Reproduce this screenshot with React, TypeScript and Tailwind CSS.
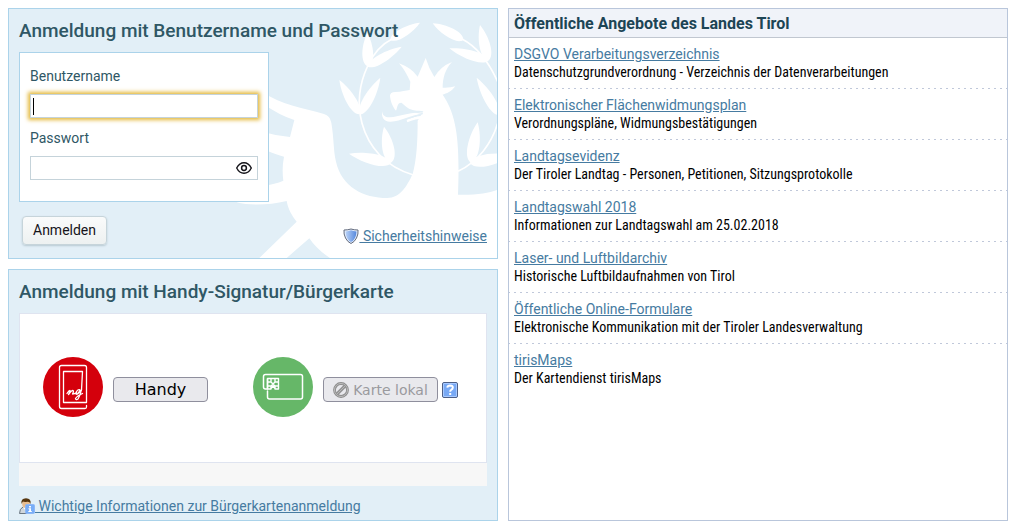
import { useState } from "react";

const offers = [
  { title: "DSGVO Verarbeitungsverzeichnis", text: "Datenschutzgrundverordnung - Verzeichnis der Datenverarbeitungen" },
  { title: "Elektronischer Flächenwidmungsplan", text: "Verordnungspläne, Widmungsbestätigungen" },
  { title: "Landtagsevidenz", text: "Der Tiroler Landtag - Personen, Petitionen, Sitzungsprotokolle" },
  { title: "Landtagswahl 2018", text: "Informationen zur Landtagswahl am 25.02.2018" },
  { title: "Laser- und Luftbildarchiv", text: "Historische Luftbildaufnahmen von Tirol" },
  { title: "Öffentliche Online-Formulare", text: "Elektronische Kommunikation mit der Tiroler Landesverwaltung" },
  { title: "tirisMaps", text: "Der Kartendienst tirisMaps" },
];

// tip x/y, base x/y, half width
const leaves = [
  [570, 68, 481, 120, 20],
  [412, 100, 414, 200, 24],
  [515, 140, 413, 200, 20],
  [328, 240, 388, 343, 22],
  [451, 233, 390, 343, 22],
  [462, 380, 483, 488, 26],
  [357, 461, 483, 490, 24],
  [608, 70, 700, 120, 22],
  [750, 75, 775, 182, 24],
  [658, 145, 775, 182, 22],
  [740, 233, 806, 345, 22],
  [743, 367, 722, 488, 26],
  [846, 466, 720, 490, 26],
];

function leafPath([tx, ty, bx, by, w]: number[]) {
  const dx = bx - tx;
  const dy = by - ty;
  const len = Math.hypot(dx, dy);
  const at = (t: number, side: number) =>
    `${tx + dx * t - (dy / len) * side} ${ty + dy * t + (dx / len) * side}`;
  return `M${tx} ${ty}C${at(0.35, w * 0.8)} ${at(0.9, w)} ${bx} ${by}C${at(0.9, -w)} ${at(0.35, -w * 0.8)} ${tx} ${ty}Z`;
}

function Eagle() {
  return (
    <svg
      className="pointer-events-none absolute right-0 bottom-0 h-[249px] w-[267px]"
      viewBox="0 27 801 747"
      fill="white"
      aria-hidden
    >
      {/* Body and wing */}
      <path d="M100 277C150 313 220 325 282 342Q300 347 304 368C312 415 310 450 318 485C335 560 400 594 472 594C510 594 530 560 548 522C560 480 563 420 563 362L600 300L637 283C680 345 690 420 684 584C740 585 775 580 801 570V774H300C275 758 252 737 238 715L170 774H88L200 665C185 645 175 630 170 603C120 615 60 618 20 607L100 590L100 557Q135 553 160 542Q155 505 162 470Q140 465 100 448V396Q140 408 180 411L193 360Q150 347 100 312Z" />
      {/* Head */}
      <path d="M539 270L541 245C530 222 521 205 507 190Q545 204 563 230Q577 198 587 174Q596 204 613 231Q632 199 666 186C645 208 638 235 638 263Q660 264 676 259C664 275 650 281 637 284L660 330L563 372C566 362 572 357 585 356L607 354V345C600 335 580 333 560 332C535 330 525 316 514 308C501 308 503 322 498 332C486 318 481 300 480 287Q480 277 496 276C515 275 528 272 539 270Z" />
      {/* Tongue */}
      <path d="M457 333C456 345 465 353 480 352C510 351 535 336 577 338L578 342C540 345 515 364 482 365C461 366 453 350 457 333Z" />
      <path d="M530 360Q552 346 607 345V356Q560 352 532 367Z" />
      <g fill="none" stroke="#e2eff7" strokeWidth="3">
        <path d="M517 337Q550 330 578 341Q560 347 538 355" />
      </g>
      {/* Laurel */}
      {leaves.map((leaf, i) => (
        <path key={i} d={leafPath(leaf)} />
      ))}
      <g fill="none" stroke="white" strokeWidth="5">
        <path d="M485 118Q440 140 413 198C384 260 383 320 396 370C415 440 465 500 550 525" />
        <path d="M696 117Q760 150 803 245" />
        <path d="M803 370C785 430 745 485 684 514" />
      </g>
    </svg>
  );
}

function ShieldIcon() {
  return (
    <svg className="h-4 w-4 shrink-0" viewBox="0 0 16 16" aria-hidden>
      <defs>
        <linearGradient id="shield">
          <stop offset="0" stopColor="#b9d2f7" />
          <stop offset="1" stopColor="#5588dd" />
        </linearGradient>
      </defs>
      <path d="M1 2Q5 2 8 1Q11 2 15 2Q15.500 6 13.500 10Q11.500 14 8 15.500Q4.500 14 2.500 10Q0.500 6 1 2Z" fill="#e6f0ff" stroke="#626a7c" />
      <path d="M2.500 3.500Q6 3.300 8 2.300Q10 3.300 13.500 3.500Q13.500 7 12 10Q10.500 13 8 14Q5.500 13 4 10Q2.500 7 2.500 3.500Z" fill="url(#shield)" />
    </svg>
  );
}

function EyeIcon() {
  return (
    <svg className="h-4 w-4" viewBox="0 0 16 16" fill="none" stroke="#15141a" aria-hidden>
      <path d="M0.700 8C2.500 4.400 5 2.700 8 2.700S13.500 4.400 15.300 8C13.500 11.600 11 13.300 8 13.300S2.500 11.600 0.700 8Z" strokeWidth="1.400" />
      <circle cx="8" cy="8" r="2.400" strokeWidth="1.500" />
    </svg>
  );
}

function PhoneIcon() {
  return (
    <svg className="h-[60px] w-[60px] shrink-0" viewBox="0 0 60 60" fill="none" stroke="white" strokeLinecap="round" strokeLinejoin="round" aria-hidden>
      <circle cx="30" cy="30" r="30" fill="#d4000c" stroke="none" />
      <path d="M43.500 48.500V50Q43.500 51.500 42 51.500H18.500Q16.500 51.500 16.500 49.500V10.500Q16.500 8.500 18.500 8.500H41.500Q43.500 8.500 43.500 10.500V45.500H20.500V14.500H39.500L38.500 33" strokeWidth="1.300" />
      <path d="M24 36.500Q26 33.500 27 33.500Q28 34 25.500 37.500Q29 33 30 33.500Q31 34.500 29.500 37Q31.500 37 33.500 35.500C32 37 33.500 38.500 35.500 35.500Q37.500 33.500 36.500 32.700C34 32 31.500 37.500 34.500 37Q37 35.500 38.500 32.500Q37.500 38 35 42Q33 43.500 32.500 41.500Q34 39 39.500 36.500" strokeWidth="1.300" />
    </svg>
  );
}

function CardIcon() {
  return (
    <svg className="h-[60px] w-[60px] shrink-0" viewBox="0 0 60 60" fill="none" stroke="white" strokeLinecap="round" strokeLinejoin="round" aria-hidden>
      <circle cx="30" cy="30" r="30" fill="#66b768" stroke="none" />
      <path d="M14.500 34V40Q14.500 42 16.500 42H47.500Q49.500 42 49.500 40V19.500Q49.500 17.500 47.500 17.500H12.500Q10.500 17.500 10.500 19.500V30Q10.500 32 12.500 32H14.500V22" strokeWidth="1.500" />
      <path d="M14.500 21.500H25.500V32H22.500L20 29L17.500 32H14.500ZM14.500 25H18L20 27L22 25H25.500M14.500 29H18L20 27L22 29H25.500M18 21.500V25M22 21.500V25M18 29V32M22 29V32" strokeWidth="1.400" />
    </svg>
  );
}

function BlockedIcon() {
  return (
    <svg className="h-4 w-4 shrink-0" viewBox="0 0 16 16" fill="none" aria-hidden>
      <circle cx="8" cy="8" r="6.500" stroke="#8d8d8d" strokeWidth="2.800" />
      <circle cx="8" cy="8" r="6.500" stroke="#bdbdbd" strokeWidth="1" />
      <path d="M4 12L12 4" stroke="#929292" strokeWidth="3.200" />
      <path d="M4 12L12 4" stroke="#b5b5b5" strokeWidth="1" />
    </svg>
  );
}

function HelpIcon() {
  return (
    <svg className="h-4 w-4" viewBox="0 0 16 16" fill="none" aria-hidden>
      <rect x="0.500" y="0.500" width="15" height="15" rx="1.500" fill="#78a9f5" stroke="#4d5f86" />
      <rect x="1.500" y="1.500" width="13" height="13" rx="0.500" stroke="#a9caff" />
      <path d="M5.300 5.700Q5.500 3.500 8.200 3.500Q10.900 3.600 10.800 5.700Q10.700 7 9.200 7.800Q8.200 8.300 8.200 9.700" stroke="white" strokeWidth="2" />
      <path d="M7.200 11H9.200V13H7.200Z" fill="white" />
    </svg>
  );
}

function UserInfoIcon() {
  return (
    <svg className="h-4 w-4 shrink-0" viewBox="0 0 16 16" aria-hidden>
      <path d="M0.500 15.500Q0.500 10.500 4 9L10 9L12 15.500Z" fill="#cfd6dc" stroke="#6b7680" />
      <path d="M4 9.500L7 13L9.500 9.500L7 8Z" fill="white" />
      <ellipse cx="7" cy="5.800" rx="3.800" ry="4.200" fill="#e8bd90" />
      <path d="M2.500 6Q1.500 0.300 7 0.200Q12.500 0.300 11.500 6Q10.500 3.500 8.500 3.800Q5 4.200 4 3.500Q3 4.500 2.500 6Z" fill="#56360f" />
      <rect x="6.500" y="6.500" width="9" height="9" rx="1" fill="#79adf7" stroke="#8fb8f6" />
      <path d="M10 8H12V9.500H10ZM9.500 10.300H12V13H12.800V14H9.300V13H10.200V11.200H9.500Z" fill="white" />
    </svg>
  );
}

export default function App() {
  const [user, setUser] = useState("");
  const [password, setPassword] = useState("");
  const [visible, setVisible] = useState(false);

  return (
    <div className="flex gap-2.5 py-2 pr-[9px] pl-2 font-['Roboto','Liberation_Sans',sans-serif] text-sm leading-5 text-[#2f5765]">
      <main className="flex w-[49%] shrink-0 flex-col gap-2.5">
        {/* Login with user name */}
        <section className="relative border border-[#abd3ea] bg-[#e2eff7] px-2.5 pt-2.5 pb-3">
          <Eagle />
          <form className="relative" onSubmit={(e) => e.preventDefault()}>
            <h2 className="mb-[9px] text-[19px] leading-6 font-medium">Anmeldung mit Benutzername und Passwort</h2>
            <div className="flex w-[250px] flex-col border border-[#abd3ea] bg-white px-2.5 pt-[13px] pb-[21px]">
              <label htmlFor="user" className="mb-2">Benutzername</label>
              <div className="relative mb-2.5 flex h-6 border border-[#c5d3da] bg-white shadow-[0_0_4px_2px_#e4b93c]">
                <input
                  id="user"
                  autoFocus
                  value={user}
                  onChange={(e) => setUser(e.target.value)}
                  className="min-w-0 flex-1 px-0.5 text-black outline-none"
                />
                {!user && <span className="pointer-events-none absolute top-[3px] left-0.5 h-[17px] w-px bg-black" />}
              </div>
              <label htmlFor="password" className="mb-2">Passwort</label>
              <div className="flex h-6 items-center border border-[#c5d3da] bg-white pr-[5px]">
                <input
                  id="password"
                  type={visible ? "text" : "password"}
                  value={password}
                  onChange={(e) => setPassword(e.target.value)}
                  className="min-w-0 flex-1 px-0.5 text-black outline-none"
                />
                <button type="button" aria-label="Passwort anzeigen" onClick={() => setVisible(!visible)}>
                  <EyeIcon />
                </button>
              </div>
            </div>
            <div className="mt-3.5 flex items-end justify-between pl-[3px]">
              <button className="mb-px h-[29px] rounded border border-[#c6d4da] bg-linear-to-b from-[#fafbfb] to-[#edf1f1] px-2.5 pb-0.5 text-[#15141a] shadow-[0_1px_2px_#b8c9d2]">
                Anmelden
              </button>
              <a href="#sicherheit" className="flex items-center text-[#467ba1] underline">
                <ShieldIcon />
                <span>&nbsp;Sicherheitshinweise</span>
              </a>
            </div>
          </form>
        </section>

        {/* Login with mobile signature or card */}
        <section className="border border-[#abd3ea] bg-[#e2eff7] px-2.5 pt-2.5 pb-1">
          <h2 className="mb-[9px] text-[19px] leading-6 font-medium">Anmeldung mit Handy-Signatur/Bürgerkarte</h2>
          <div className="flex border border-[#dfe4f0] bg-white px-[23px] pt-[43px] pb-[45px] font-['DejaVu_Sans',sans-serif]">
            <div className="flex w-[210px] shrink-0 items-end gap-2.5">
              <PhoneIcon />
              <button className="mb-[15px] h-[25px] w-[95px] rounded border border-[#8f8f9d] bg-[#e9e9ed] text-base leading-5 text-black">
                Handy
              </button>
            </div>
            <div className="flex items-end gap-2.5">
              <CardIcon />
              <div className="mb-[15px] flex items-center gap-1">
                <button
                  disabled
                  className="flex h-[25px] w-[115px] items-center justify-center gap-1 rounded border border-[#8f8f9d] bg-[#e9e9ed] text-sm text-[#9a9a9e]"
                >
                  <BlockedIcon />
                  Karte lokal
                </button>
                <button aria-label="Hilfe">
                  <HelpIcon />
                </button>
              </div>
            </div>
          </div>
          <div className="h-[23px] bg-[#f7f7f7]" />
          <div className="mt-2.5 flex">
            <a href="#buergerkarte" className="flex items-center text-[#467ba1] underline">
              <UserInfoIcon />
              <span>&nbsp;Wichtige Informationen zur Bürgerkartenanmeldung</span>
            </a>
          </div>
        </section>
      </main>

      {/* Public services */}
      <aside className="min-w-0 flex-1 border border-[#b9c6db]">
        <h2 className="border-b border-[#c1c7d0] bg-[#f0f3f9] px-[5px] pt-[5px] pb-[3px] text-base leading-5 font-bold text-[#1c4555]">
          Öffentliche Angebote des Landes Tirol
        </h2>
        <ul>
          {offers.map((offer) => (
            <li
              key={offer.title}
              className="bg-[repeating-linear-gradient(90deg,#c0c8da_0_1px,transparent_1px_5px,#c0c8da_5px_6px)] bg-[length:100%_1px] bg-bottom bg-no-repeat px-[5px] pt-[7px] pb-2 leading-[18px] last:bg-none"
            >
              <a href="#angebot" className="text-[#467ba1] underline">{offer.title}</a>
              <p className="font-['Roboto_Condensed','Roboto',sans-serif] text-sm leading-[18px] text-black">{offer.text}</p>
            </li>
          ))}
        </ul>
      </aside>
    </div>
  );
}
